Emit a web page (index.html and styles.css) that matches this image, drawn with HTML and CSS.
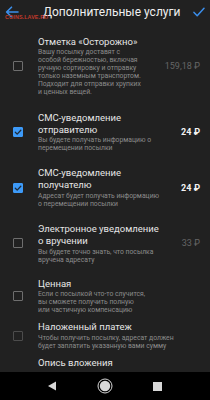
FILE: index.html
```html
<!DOCTYPE html>
<html lang="ru">
<head>
<meta charset="utf-8">
<link rel="stylesheet" href="styles.css">
</head>
<body>
<div class="screen">
  <header class="topbar">
    <svg class="icon back" viewBox="0 0 14 12" width="14" height="12"><path d="M13 6H2M6.5 1.2L1.6 6l4.9 4.8" fill="none" stroke="#3b8eea" stroke-width="1.6" stroke-linecap="round" stroke-linejoin="round"/></svg>
    <div class="title">Дополнительные услуги</div>
    <svg class="icon ok" viewBox="0 0 12 10" width="12" height="10"><path d="M1 5.4l3.2 3.4L11 1.2" fill="none" stroke="#3b8eea" stroke-width="1.5" stroke-linecap="round" stroke-linejoin="round"/></svg>
    <span class="watermark">COINS.LAVE.RU</span>
  </header>
  <main class="list">
    <div class="row">
      <span class="box"></span>
      <div class="text">
        <div class="name">Отметка «Осторожно»</div>
        <div class="desc">Вашу посылку доставят с<br>особой бережностью, включая<br>ручную сортировку и отправку<br>только наземным транспортом.<br>Подходит для отправки хрупких<br>и ценных вещей.</div>
      </div>
      <span class="price off">159,18 ₽</span>
    </div>
    <div class="row">
      <span class="box on"><svg viewBox="0 0 10 10" width="10" height="10"><path d="M2.3 5.2l1.9 1.9 3.6-3.9" fill="none" stroke="#1d2a38" stroke-width="1.3" stroke-linecap="round" stroke-linejoin="round"/></svg></span>
      <div class="text">
        <div class="name">СМС-уведомление<br>отправителю</div>
        <div class="desc">Вы будете получать информацию о<br>перемещении посылки</div>
      </div>
      <span class="price">24 ₽</span>
    </div>
    <div class="row">
      <span class="box on"><svg viewBox="0 0 10 10" width="10" height="10"><path d="M2.3 5.2l1.9 1.9 3.6-3.9" fill="none" stroke="#1d2a38" stroke-width="1.3" stroke-linecap="round" stroke-linejoin="round"/></svg></span>
      <div class="text">
        <div class="name">СМС-уведомление<br>получателю</div>
        <div class="desc">Адресат будет получать информацию<br>о перемещении посылки</div>
      </div>
      <span class="price">24 ₽</span>
    </div>
    <div class="row">
      <span class="box"></span>
      <div class="text">
        <div class="name">Электронное уведомление<br>о вручении</div>
        <div class="desc">Вы будете точно знать, что посылка<br>вручена адресату</div>
      </div>
      <span class="price off">33 ₽</span>
    </div>
    <div class="row mid">
      <span class="box"></span>
      <div class="text">
        <div class="name">Ценная</div>
        <div class="desc">Если с посылкой что-то случится,<br>вы сможете получить полную<br>или частичную компенсацию</div>
      </div>
    </div>
    <div class="row compact">
      <span class="box dim"></span>
      <div class="text">
        <div class="name">Наложенный платеж</div>
        <div class="desc">Чтобы получить посылку, адресат должен<br>будет заплатить указанную вами сумму</div>
      </div>
    </div>
    <div class="row compact last">
      <div class="text">
        <div class="name">Опись вложения</div>
      </div>
    </div>
  </main>
  <nav class="navbar">
    <svg viewBox="0 0 10 10" width="10" height="10"><path d="M9 0.5V9.5L1 5z" fill="#d8d8d8"/></svg>
    <svg viewBox="0 0 16 16" width="16" height="16"><circle cx="8" cy="8" r="7" fill="none" stroke="#d8d8d8" stroke-width="1"/><circle cx="8" cy="8" r="5.2" fill="#d8d8d8"/></svg>
    <svg viewBox="0 0 9 9" width="9" height="9"><rect x="0" y="0" width="9" height="9" fill="#d8d8d8"/></svg>
  </nav>
</div>
</body>
</html>
```
FILE: styles.css
```css
* { box-sizing: border-box; }
html, body { margin: 0; padding: 0; }
body {
  background: #212121;
  font-family: Roboto, "Noto Sans", sans-serif;
  color: #e8e8e8;
}
.screen {
  width: 210px;
  height: 400px;
  display: flex;
  flex-direction: column;
  overflow: hidden;
}
.topbar {
  position: relative;
  height: 24px;
  flex: none;
  display: flex;
  align-items: center;
  padding: 0 5px 0 5px;
}
.topbar .back { flex: none; }
.topbar .title {
  margin-left: 24px;
  font-size: 12px;
  color: #efefef;
  flex: 1;
  white-space: nowrap;
}
.topbar .ok { flex: none; }
.watermark {
  position: absolute;
  left: 5px;
  top: 14px;
  font-family: "Liberation Sans", sans-serif;
  font-weight: bold;
  font-size: 5.4px;
  color: #c0392b;
  letter-spacing: 0.1px;
}
.list {
  flex: 1;
  overflow: hidden;
  padding-top: 4.4px;
}
.row {
  display: flex;
  align-items: center;
  padding: 7.6px 10px 7.6px 13px;
}
.row.mid { padding-top: 6.8px; padding-bottom: 3.4px; }
.row.compact { padding-top: 3.6px; padding-bottom: 3.4px; }
.row.last .text { margin-left: 25px; }
.box {
  flex: none;
  width: 10px;
  height: 10px;
  border: 1.5px solid #6e6e6e;
  border-radius: 1px;
  display: flex;
  align-items: center;
  justify-content: center;
}
.box.dim { border-color: #4c4c4c; }
.box.on {
  background: #3d9af8;
  border-color: #3d9af8;
}
.box.on svg { flex: none; }
.text {
  flex: 1;
  margin-left: 15px;
  white-space: nowrap;
}
.name {
  font-size: 9.5px;
  line-height: 12px;
  color: #e6e6e6;
}
.desc {
  margin-top: 0.5px;
  font-size: 6.8px;
  line-height: 8px;
  color: #8c8c8c;
}
.price {
  flex: none;
  font-size: 9px;
  font-weight: bold;
  color: #f2f2f2;
}
.price.off {
  font-weight: normal;
  color: #666666;
}
.navbar {
  flex: none;
  height: 28px;
  background: #000;
  display: flex;
  align-items: center;
  justify-content: space-between;
  padding: 0 48px 0 47px;
}
```
